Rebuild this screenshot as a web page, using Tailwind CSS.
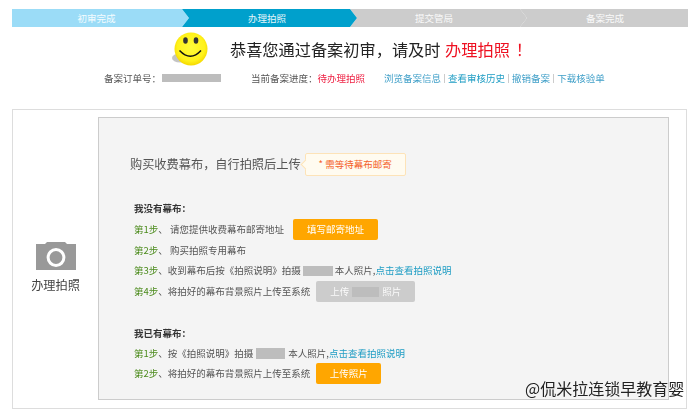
<!DOCTYPE html>
<html lang="zh">
<head>
<meta charset="utf-8">
<script src="https://cdn.jsdelivr.net/npm/@tailwindcss/browser@4"></script>
</head>
<body class="relative w-[700px] h-[414px] overflow-hidden bg-white font-['Noto_Sans_CJK_SC',sans-serif] text-[9.5px] text-[#555]">
 <div class="h-[414px] pt-[9px] blur-[0.35px]">
  <div class="flex ml-[12px] w-[676px] h-[18px] text-white/90 leading-[18px] text-center">
    <div class="w-[177px] -mr-[7px] pr-[8px] bg-[#9bdcf7] [clip-path:polygon(0_0,170px_0,100%_50%,170px_100%,0_100%)]">初审完成</div>
    <div class="relative z-10 w-[175px] -mr-[7px] bg-[#00a0cc] [clip-path:polygon(0_0,168px_0,100%_50%,168px_100%,0_100%,7px_50%)] pl-[2px] pr-[7px]">办理拍照</div>
    <div class="w-[177px] -mr-[7px] bg-[#cccccc] [clip-path:polygon(0_0,170px_0,100%_50%,170px_100%,0_100%,7px_50%)] pr-[9px]">提交管局</div>
    <div class="w-[168px] bg-[#cccccc] [clip-path:polygon(0_0,100%_0,100%_100%,0_100%,7px_50%)] pl-[2px] pr-0">备案完成</div>
  </div>

  <div class="flex items-center h-[38px] mt-[3px] pl-[169px]">
    <svg class="w-[42px] h-[36px] shrink-0" viewBox="0 0 42 36">
      <defs><radialGradient id="s" cx="50%" cy="45%" r="55%"><stop offset="0%" stop-color="#fffb3a"/><stop offset="75%" stop-color="#fff21a"/><stop offset="100%" stop-color="#f5d800"/></radialGradient></defs>
      <ellipse cx="11" cy="27" rx="8" ry="4.5" fill="#c4c4c4"/>
      <circle cx="22" cy="18" r="16.5" fill="url(#s)"/>
      <ellipse cx="16.500" cy="9.500" rx="2.300" ry="3.300" fill="#333"/>
      <ellipse cx="27" cy="9.500" rx="2.300" ry="3.300" fill="#333"/>
      <path d="M10.500 19.500 Q21.500 31 32 19.500" fill="none" stroke="#111" stroke-width="1.500"/>
    </svg>
    <div class="ml-[19px] text-[16.200px] leading-[24px] text-[#222] whitespace-pre">恭喜您通过备案初审<span class="font-['Noto_Sans_CJK_TC',sans-serif]">&#65292;</span>请及时 <span class="ml-[1px] text-[#ee1122]">办理拍照<span class="ml-[6px] font-['Noto_Sans_CJK_TC',sans-serif]">&#65281;</span></span></div>
  </div>

  <div class="flex items-center h-[14px] mt-[3px] pl-[104px] whitespace-nowrap">
    <span>备案订单号<span class="font-['Noto_Sans_CJK_TC',sans-serif]">&#65306;</span></span><span class="w-[59px] h-[8px] ml-[1px] bg-[#bdbdbd]"></span>
    <span class="ml-[30px]">当前备案进度<span class="font-['Noto_Sans_CJK_TC',sans-serif]">&#65306;</span></span><span class="text-[#ee2244]">待办理拍照</span>
    <span class="ml-[19px] text-[#3f9fc8]">浏览备案信息</span>
    <span class="mx-[3px] w-px h-[9px] bg-[#ccc]"></span>
    <span class="text-[#1f9dc4]">查看审核历史</span>
    <span class="mx-[3px] w-px h-[9px] bg-[#ccc]"></span>
    <span class="text-[#3f9fc8]">撤销备案</span>
    <span class="mx-[3px] w-px h-[9px] bg-[#ccc]"></span>
    <span class="text-[#3f9fc8]">下载核验单</span>
  </div>

  <div class="flex ml-[12px] mt-[24px] w-[675px] h-[300px] border border-[#dddddd] bg-white">
    <div class="flex flex-col items-center w-[85px] pt-[132px]">
      <svg class="w-[40px] h-[28px]" viewBox="0 0 40 28">
        <path fill="#999999" d="M0 2 H9 L11 0 H29 L31 2 H40 V28 H0 Z"/>
        <circle cx="20" cy="15.500" r="7.900" fill="none" stroke="#fff" stroke-width="3"/>
      </svg>
      <div class="mt-[6px] text-[12.200px] leading-[18px] text-[#444]">办理拍照</div>
    </div>
    <div class="mt-[7px] w-[571px] h-[283px] border border-[#cccccc] bg-[#f4f4f4] pl-[31px]">
      <div class="flex items-center h-[23px] mt-[35px]">
        <span class="text-[12.200px] text-[#555]">购买收费幕布<span class="font-['Noto_Sans_CJK_TC',sans-serif]">&#65292;</span>自行拍照后上传</span>
        <span class="relative ml-[4px] flex items-center justify-center w-[101px] h-[23px] border border-[#fde3b8] rounded-[2px] bg-[#fffbf0] text-[#f4622a]">* 需等待幕布邮寄
          <span class="absolute left-[-4px] top-[7px] w-[7px] h-[7px] rotate-45 border-l border-b border-[#fde3b8] bg-[#fffbf0]"></span>
        </span>
      </div>
      <div class="pl-[4px] mt-[21px] text-[#555]">
        <div class="flex items-center h-[22px] font-bold text-[#333]"><span>我没有幕布<span class="font-['Noto_Sans_CJK_TC',sans-serif]">&#65306;</span></span></div>
        <div class="flex items-center h-[21px]"><span class="text-[#4a8a1a]">第1步</span><span class="whitespace-pre">、 请您提供收费幕布邮寄地址</span>
          <span class="ml-[9px] flex items-center justify-center w-[85px] h-[21px] rounded-[2px] bg-[#ffa600] text-white">填写邮寄地址</span></div>
        <div class="flex items-center h-[20px]"><span class="text-[#4a8a1a]">第2步</span><span class="whitespace-pre">、 购买拍照专用幕布</span></div>
        <div class="flex items-center h-[21px] whitespace-nowrap"><span class="text-[#4a8a1a]">第3步</span><span>、收到幕布后按《拍照说明》拍摄</span><span class="w-[30px] h-[10px] ml-[2px] mr-[2px] bg-[#bdbdbd]"></span><span>本人照片,</span><span class="text-[#1f9dc4]">点击查看拍照说明</span></div>
        <div class="flex items-center h-[21px]"><span class="text-[#4a8a1a]">第4步</span><span>、将拍好的幕布背景照片上传至系统</span>
          <span class="ml-[6px] flex items-center justify-center gap-[3px] w-[99px] h-[21px] rounded-[2px] bg-[#cccccc] text-white/90">上传<span class="w-[27px] h-[10px] bg-[#bdbdbd]"></span>照片</span></div>
      </div>
      <div class="pl-[4px] mt-[21px] text-[#555]">
        <div class="flex items-center h-[20px] font-bold text-[#333]"><span>我已有幕布<span class="font-['Noto_Sans_CJK_TC',sans-serif]">&#65306;</span></span></div>
        <div class="flex items-center h-[20px] whitespace-nowrap"><span class="text-[#4a8a1a]">第1步</span><span>、按《拍照说明》拍摄</span><span class="w-[29px] h-[11px] ml-[3px] mr-[3px] bg-[#bdbdbd]"></span><span>本人照片,</span><span class="text-[#1f9dc4]">点击查看拍照说明</span></div>
        <div class="flex items-center h-[21px]"><span class="text-[#4a8a1a]">第2步</span><span>、将拍好的幕布背景照片上传至系统</span>
          <span class="ml-[6px] flex items-center justify-center w-[65px] h-[21px] rounded-[2px] bg-[#ffa600] text-white">上传照片</span></div>
      </div>
    </div>
  </div>
 </div>
 <div class="absolute left-[525px] top-[377px] text-[16px] leading-[22px] text-[#222] whitespace-nowrap">@侃米拉连锁早教育婴</div>
</body>
</html>
